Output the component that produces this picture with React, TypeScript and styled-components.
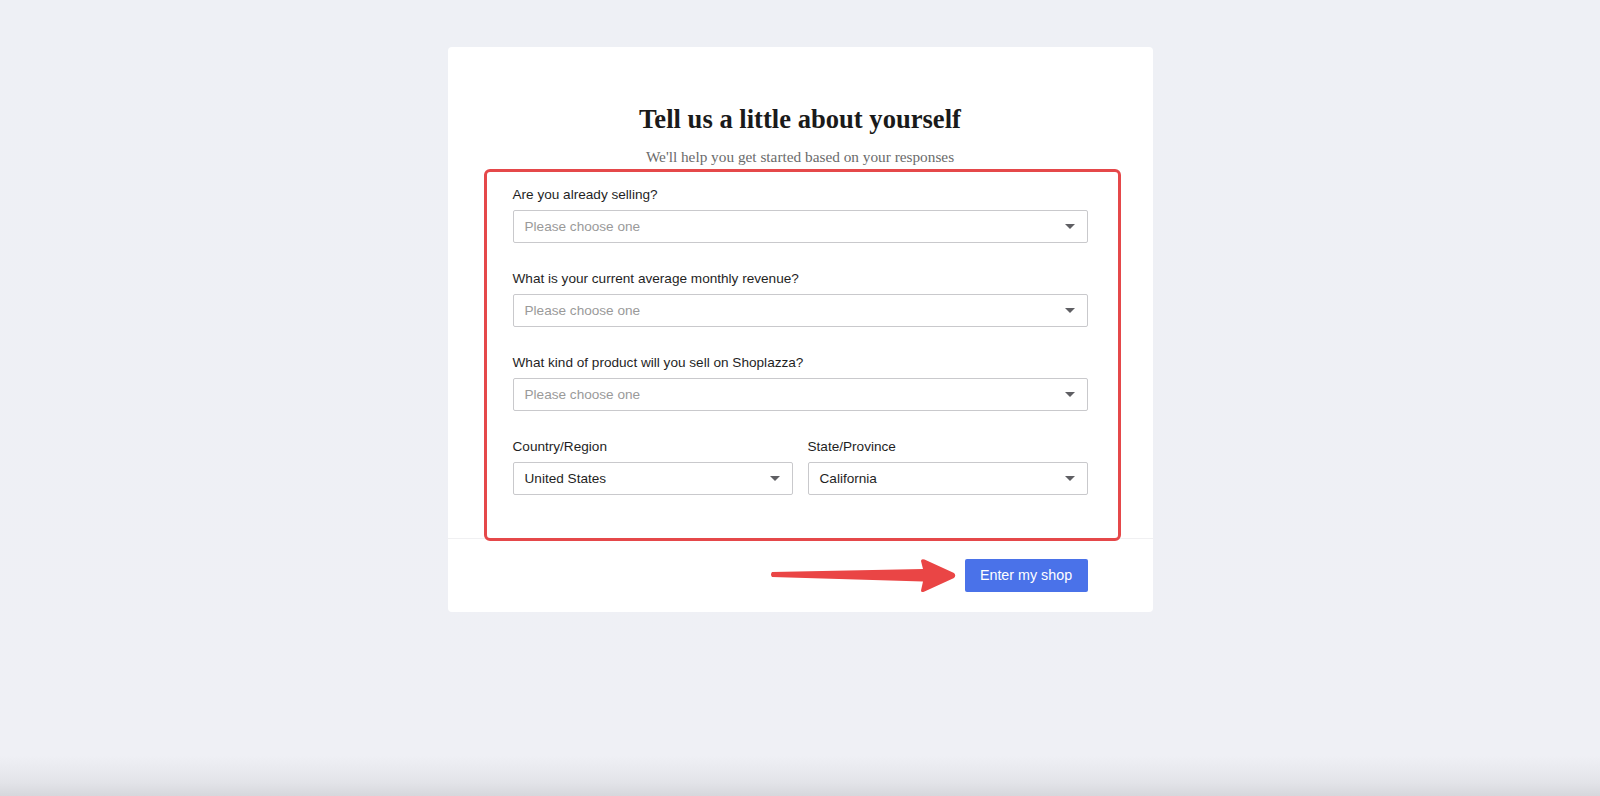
import React from 'react';
import styled, { createGlobalStyle } from 'styled-components';

const GlobalStyle = createGlobalStyle`
    html, body {
        margin: 0;
        padding: 0;
    }
    body {
        font-family: "Liberation Sans", Arial, sans-serif;
    }
`;

const Page = styled.div`
    min-height: 796px;
    box-sizing: border-box;
    padding-top: 47px;
    display: flex;
    justify-content: center;
    align-items: flex-start;
    background: linear-gradient(to bottom, #eef0f5 0, #eff0f5 756px, #e3e4e9 782px, #d6d7dc 796px);
`;

const Card = styled.div`
    position: relative;
    width: 705px;
    background: #fff;
    border-radius: 4px;
`;

const Body = styled.div`
    padding: 56px 65px 43px;
    border-bottom: 1px solid #f0f0f2;
`;

const Title = styled.h1`
    margin: 0;
    font-family: "Liberation Serif", "Times New Roman", serif;
    font-size: 26.6px;
    line-height: 32px;
    font-weight: 700;
    color: #1a1a1a;
    text-align: center;
`;

const Subtitle = styled.p`
    margin: 11.5px 0 19px;
    font-family: "Liberation Serif", "Times New Roman", serif;
    font-size: 15.3px;
    line-height: 20px;
    color: #6b6b6b;
    text-align: center;
`;

const Fields = styled.div`
    display: flex;
    flex-direction: column;
    gap: 27px;
`;

const Row = styled.div`
    display: grid;
    grid-template-columns: 1fr 1fr;
    gap: 15px;
`;

const Field = styled.div`
    display: flex;
    flex-direction: column;
    gap: 6px;
`;

const Label = styled.label`
    font-size: 13.6px;
    line-height: 18px;
    color: #1f1f1f;
`;

const SelectBox = styled.div<{ $placeholder?: boolean }>`
    height: 33px;
    box-sizing: border-box;
    border: 1px solid #c9c9cc;
    border-radius: 2px;
    padding: 0 12px 0 11px;
    display: flex;
    align-items: center;
    justify-content: space-between;
    font-size: 13.6px;
    color: ${p => (p.$placeholder ? '#9a9a9a' : '#1f1f1f')};
`;

const Caret = styled.span`
    width: 0;
    height: 0;
    border-left: 5px solid transparent;
    border-right: 5px solid transparent;
    border-top: 5px solid #5f5f63;
`;

const Footer = styled.div`
    padding: 20px 65px;
    display: flex;
    justify-content: flex-end;
`;

const Button = styled.button`
    height: 33px;
    width: 123px;
    border: none;
    border-radius: 2px;
    background: #4a72e9;
    color: #fff;
    font-family: "Liberation Sans", Arial, sans-serif;
    font-size: 14.3px;
    cursor: pointer;
`;

const Highlight = styled.div`
    position: absolute;
    left: 36px;
    top: 122px;
    width: 637px;
    height: 372px;
    box-sizing: border-box;
    border: 3px solid #e5484a;
    border-radius: 6px;
    pointer-events: none;
`;

const Arrow = styled.svg`
    position: absolute;
    left: 320px;
    top: 510px;
    pointer-events: none;
`;

const Select: React.FC<{ value?: string; placeholder?: string }> = ({ value, placeholder }) => (
    <SelectBox $placeholder={!value}>
        <span>{value || placeholder}</span>
        <Caret />
    </SelectBox>
);

export default function App() {
    return (
        <>
            <GlobalStyle />
            <Page>
                <Card>
                    <Body>
                        <Title>Tell us a little about yourself</Title>
                        <Subtitle>We'll help you get started based on your responses</Subtitle>
                        <Fields>
                            <Field>
                                <Label>Are you already selling?</Label>
                                <Select placeholder="Please choose one" />
                            </Field>
                            <Field>
                                <Label>What is your current average monthly revenue?</Label>
                                <Select placeholder="Please choose one" />
                            </Field>
                            <Field>
                                <Label>What kind of product will you sell on Shoplazza?</Label>
                                <Select placeholder="Please choose one" />
                            </Field>
                            <Row>
                                <Field>
                                    <Label>Country/Region</Label>
                                    <Select value="United States" />
                                </Field>
                                <Field>
                                    <Label>State/Province</Label>
                                    <Select value="California" />
                                </Field>
                            </Row>
                        </Fields>
                    </Body>
                    <Footer>
                        <Button>Enter my shop</Button>
                    </Footer>
                    <Highlight />
                    <Arrow width="190" height="40" viewBox="0 0 190 40">
                        <path
                            d="M4 15 L155 12 L153 4 Q153 1.5 156.5 2.5 L186 16 Q188.5 18.5 186 21 L156.5 34.5 Q153 36 153 33.5 L155 24.5 L4 20 Q2 17.5 4 15 Z"
                            fill="#ea4545"
                        />
                    </Arrow>
                </Card>
            </Page>
        </>
    );
}
